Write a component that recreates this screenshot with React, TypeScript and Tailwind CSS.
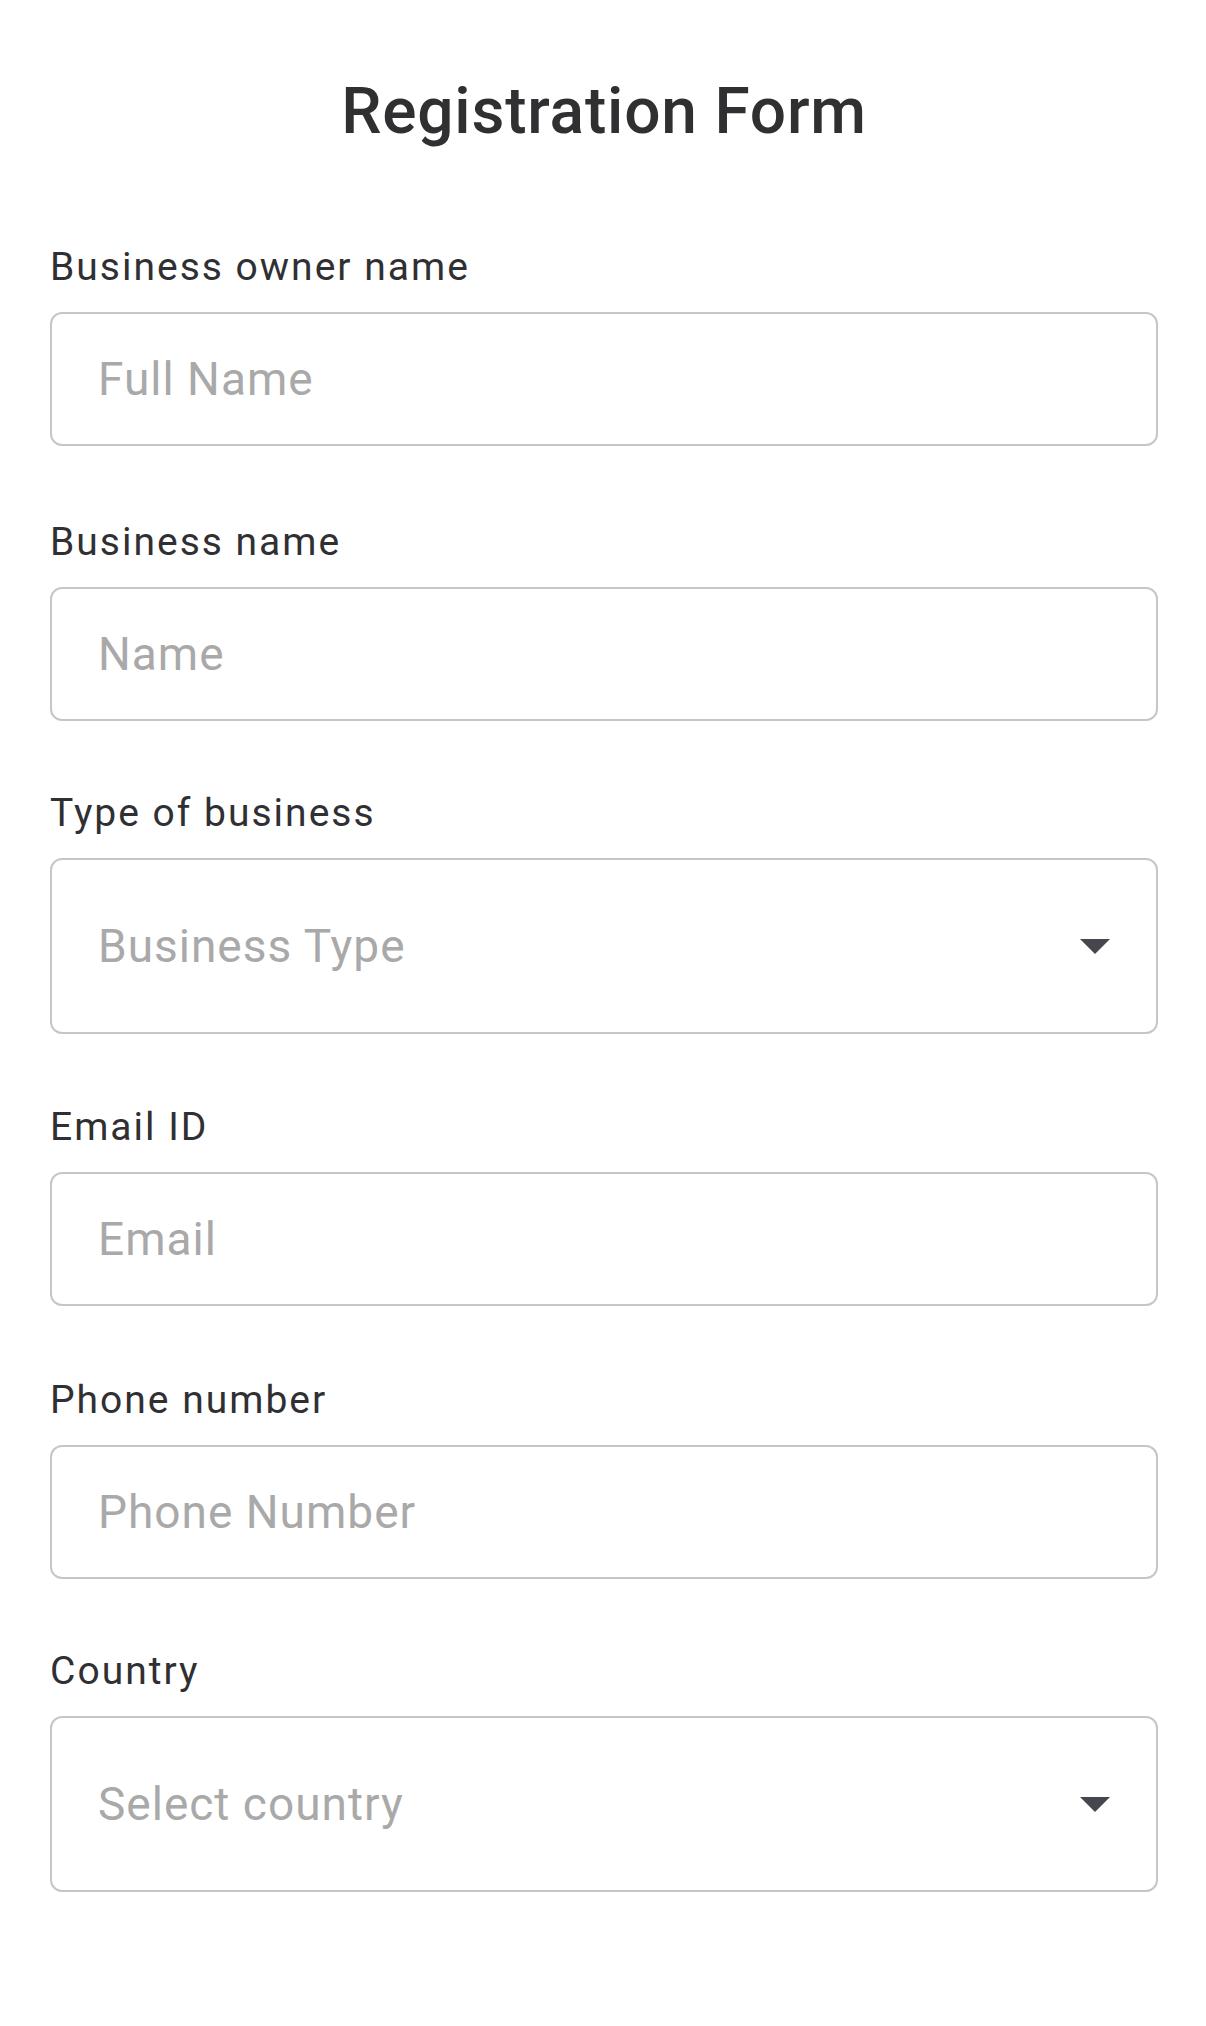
import React from "react";

function Label({ children }: { children: React.ReactNode }) {
  return <div className="text-[39px] leading-[45px] tracking-[2px] text-[#303033]">{children}</div>;
}

function TextField({ placeholder, type = "text" }: { placeholder: string; type?: string }) {
  return (
    <input
      type={type}
      placeholder={placeholder}
      className="mt-[22px] block h-[134px] w-full rounded-[12px] border-2 border-[#c6c6c6] bg-white pl-[46px] pr-[46px] text-[46px] tracking-[1px] text-[#303033] outline-none placeholder:text-[#a9a9a9]"
    />
  );
}

function SelectField({ placeholder }: { placeholder: string }) {
  return (
    <div className="mt-[22px] flex h-[176px] w-full items-center justify-between rounded-[12px] border-2 border-[#c6c6c6] bg-white pl-[46px] pr-[46px]">
      <span className="text-[46px] tracking-[1px] text-[#a9a9a9]">{placeholder}</span>
      <svg width="30" height="15" viewBox="0 0 30 15" className="shrink-0">
        <path d="M0 0 L30 0 L15 15 Z" fill="#46464e" />
      </svg>
    </div>
  );
}

function Field({
  label,
  className = "",
  children,
}: {
  label: string;
  className?: string;
  children: React.ReactNode;
}) {
  return (
    <div className={className}>
      <Label>{label}</Label>
      {children}
    </div>
  );
}

export default function App() {
  return (
    <div className="min-h-screen bg-white font-['Roboto',sans-serif]">
      <div className="pl-[50px] pr-[48px] pt-[74px] pb-[100px]">
        <h1 className="text-center text-[64px] font-medium leading-[75px] tracking-[0.8px] text-[#303033]">
          Registration Form
        </h1>

        <Field label="Business owner name" className="mt-[96px]">
          <TextField placeholder="Full Name" />
        </Field>
        <Field label="Business name" className="mt-[74px]">
          <TextField placeholder="Name" />
        </Field>
        <Field label="Type of business" className="mt-[70px]">
          <SelectField placeholder="Business Type" />
        </Field>
        <Field label="Email ID" className="mt-[71px]">
          <TextField placeholder="Email" type="email" />
        </Field>
        <Field label="Phone number" className="mt-[72px]">
          <TextField placeholder="Phone Number" type="tel" />
        </Field>
        <Field label="Country" className="mt-[70px]">
          <SelectField placeholder="Select country" />
        </Field>
      </div>
    </div>
  );
}
